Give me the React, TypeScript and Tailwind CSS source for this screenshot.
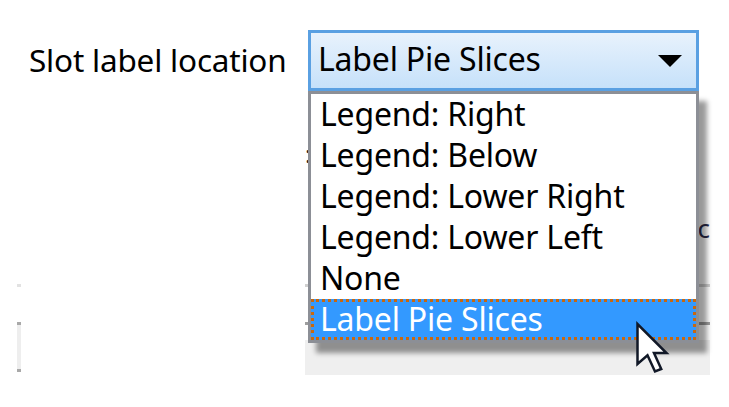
const options = [
  "Legend: Right",
  "Legend: Below",
  "Legend: Lower Right",
  "Legend: Lower Left",
  "None",
  "Label Pie Slices",
];

const selected = "Label Pie Slices";

function Cursor() {
  return (
    <svg width="40" height="56" viewBox="0 0 16 22" className="absolute left-[635px] top-[321px]">
      <path
        d="M1 1 L1 17 L5 13.5 L8 20 L10.5 19 L7.6 12.6 L12.6 12.6 Z"
        fill="#ffffff"
        stroke="#111827"
        strokeWidth="1"
        strokeLinejoin="miter"
      />
    </svg>
  );
}

export default function App() {
  return (
    <div
      className="relative w-[729px] h-[407px] overflow-hidden bg-white text-black"
      style={{ fontFamily: '"Noto Sans", "Open Sans", sans-serif' }}
    >
      {/* Top row: label + combo */}
      <div className="flex items-center pt-[30px] pl-[29px]">
        <div className="w-[279px] text-[31.5px] leading-none pb-[2px] tracking-[-0.2px]">Slot label location</div>
        <div className="flex items-center w-[391px] h-[61px] border-[3px] border-[#5aa0e2] bg-gradient-to-b from-[#e8f2fc] to-[#c6e1fa] pl-[7px] pr-[14px]">
          <span className="flex-1 text-[32px] leading-none pb-[4px] tracking-[-0.2px]">Label Pie Slices</span>
          <svg width="24" height="12" viewBox="0 0 24 12">
            <path d="M0 0 H24 L12 12 Z" fill="#000" />
          </svg>
        </div>
      </div>

      {/* Background grid fragments */}
      <div className="flex">
        <div className="ml-[17px] w-[4px] flex flex-col">
          <div className="h-[193px]" />
          <div className="h-[3px] bg-[#e2e2e2]" />
          <div className="h-[35px]" />
          <div className="h-[3px] bg-[#a9a9a9]" />
          <div className="h-[44px] bg-[#eeeeee]" />
          <div className="h-[3px] bg-[#a9a9a9]" />
        </div>
        <div className="ml-[284px] w-[405px] h-[284px] flex flex-col">
          <div className="h-[48px]" />
          <div className="flex items-center h-[30px] text-[24px] leading-none text-[#222]">
            <span>:</span>
          </div>
          <div className="h-[44px]" />
          <div className="flex items-center justify-end h-[30px] text-[26px] leading-none text-[#2a2a4a]">
            <span>c</span>
          </div>
          <div className="h-[41px]" />
          <div className="h-[3px] bg-[#d0d0d0]" />
          <div className="h-[35px]" />
          <div className="h-[3px] bg-[#9e9e9e]" />
          <div className="h-[15px]" />
          <div className="flex-1 bg-[#efefef]" />
        </div>
      </div>

      {/* Dropdown list */}
      <div className="absolute left-[308px] top-[91px] w-[391px] border-[3px] border-[#8c8f96] bg-white shadow-[8px_10px_5px_rgba(0,0,0,0.4)]">
        {options.map((o) =>
          o === selected ? (
            <div
              key={o}
              className="h-[41px] flex items-center pl-[6px] bg-[#3399ff] text-white text-[32px] leading-none tracking-[-0.2px] border-[3px] border-dotted border-[#c8680f]"
            >
              <span className="pb-[2px]">{o}</span>
            </div>
          ) : (
            <div key={o} className="h-[41px] flex items-center pl-[9px] text-[32px] leading-none tracking-[-0.2px]">
              <span className="pb-[2px]">{o}</span>
            </div>
          )
        )}
      </div>

      <Cursor />
    </div>
  );
}
